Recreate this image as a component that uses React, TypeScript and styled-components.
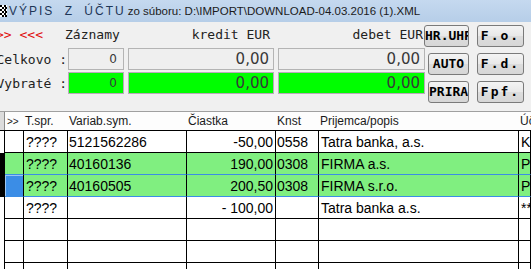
import React from 'react';
import styled, { createGlobalStyle } from 'styled-components';

const GlobalStyle = createGlobalStyle`
  html, body {
    margin: 0;
    padding: 0;
    background: #f0f0f0;
    overflow: hidden;
  }
`;

const MONO = '"DejaVu Sans Mono", "Liberation Mono", monospace';
const SANS = '"Liberation Sans", Arial, sans-serif';
const COLS = '5px 19px 44px 119px 89px 43px 200px 1fr';

const Window = styled.div`
  width: 531px;
  height: 269px;
  overflow: hidden;
  background: #f0f0f0;
  font-family: ${SANS};
`;

const TitleBar = styled.div`
  height: 22px;
  display: flex;
  align-items: center;
  background: linear-gradient(#c5d9ef, #b6cee8);
  color: #1e3657;
  white-space: nowrap;
`;

const TitleIcon = styled.svg`
  width: 7px;
  height: 12px;
  margin-right: 2px;
  flex: none;
`;

const TitleMain = styled.span`
  font-size: 12px;
  letter-spacing: 2px;
  word-spacing: 5px;
  margin-right: 2px;
`;

const TitleFile = styled.span`
  font-size: 11.5px;
  color: #1b1b1b;
`;

const TopArea = styled.div`
  height: 89px;
  display: flex;
`;

const Summary = styled.div`
  display: grid;
  grid-template-columns: 64px 56px 146px 147px;
  grid-template-rows: 24px 22px 22px;
  column-gap: 4px;
  row-gap: 2px;
  width: 425px;
  font-family: ${MONO};
  font-size: 13px;
  color: #222;
`;

const Caption = styled.div<{ $right?: boolean; $pad?: number }>`
  display: flex;
  align-items: center;
  justify-content: ${({ $right }) => ($right ? 'flex-end' : 'flex-start')};
  padding-right: ${({ $pad }) => $pad ?? 0}px;
  white-space: nowrap;
`;

const RowLabel = styled.div`
  display: flex;
  align-items: center;
  justify-content: flex-end;
  margin-right: -3px;
  white-space: nowrap;
`;

const Arrows = styled.span`
  color: #e01010;
  margin-left: -4px;
`;

const Records = styled.span`
  margin-left: -3px;
`;

const Field = styled.div<{ $green?: boolean; $small?: boolean }>`
  box-sizing: border-box;
  display: flex;
  align-items: center;
  justify-content: flex-end;
  padding-right: ${({ $small }) => ($small ? 6 : 4)}px;
  border: 1px solid ${({ $green }) => ($green ? '#bba9bb' : '#b4b4b4')};
  background: ${({ $green }) => ($green ? '#00fe00' : '#efefef')};
  font-family: "DejaVu Sans", sans-serif;
  font-size: ${({ $small }) => ($small ? 12 : 15)}px;
  color: #383838;
`;

const Buttons = styled.div`
  display: grid;
  grid-template-columns: 45px 47px;
  grid-template-rows: repeat(3, 22px);
  column-gap: 8px;
  row-gap: 6px;
  margin: 3px 0 0 -1px;
  align-content: start;
`;

const Btn = styled.div<{ $w?: number; $spaced?: boolean }>`
  box-sizing: border-box;
  width: ${({ $w }) => ($w ? `${$w}px` : '100%')};
  justify-self: end;
  overflow: hidden;
  white-space: nowrap;
  text-align: center;
  line-height: 20px;
  border: 1px solid #7a7a7a;
  border-radius: 3px;
  background: linear-gradient(#f4f4f4, #e8e8e8 50%, #dddddd 51%, #d6d6d6);
  font-family: ${MONO};
  font-weight: bold;
  font-size: 13px;
  letter-spacing: ${({ $spaced }) => ($spaced ? 2 : 0)}px;
  color: #000;
`;

const Table = styled.div`
  border-top: 1px solid #a0a0a0;
  font-family: ${SANS};
`;

const HeadRow = styled.div`
  display: grid;
  grid-template-columns: ${COLS};
  height: 18px;
  background: #fdfdfd;
  border-bottom: 1px solid #000;
  font-size: 12px;
  color: #1a1a1a;
`;

const HeadCell = styled.div<{ $marker?: boolean }>`
  display: flex;
  align-items: center;
  padding-left: 1px;
  white-space: nowrap;
  overflow: hidden;
  background: ${({ $marker }) => ($marker ? '#dcdcdc' : 'transparent')};
  border-right: ${({ $marker }) => ($marker ? '1px solid #8a8a8a' : 'none')};
`;

const Small = styled.span`
  font-size: 10px;
  margin-left: 1px;
`;

const Row = styled.div<{ $bg?: string; $line?: string }>`
  display: grid;
  grid-template-columns: ${COLS};
  height: 22px;
  background: ${({ $bg }) => $bg ?? '#fff'};
  font-size: 14px;
  color: #000;
  --line: ${({ $line }) => $line ?? '#000'};
`;

const Marker = styled.div<{ $on?: boolean }>`
  background: ${({ $on }) => ($on ? '#000' : '#fff')};
  border-right: 1px solid #000;
`;

const Cell = styled.div<{ $right?: boolean; $focus?: boolean; $tight?: boolean }>`
  display: flex;
  align-items: center;
  justify-content: ${({ $right }) => ($right ? 'flex-end' : 'flex-start')};
  padding: 0 2px 0 ${({ $tight }) => ($tight ? 1 : 2)}px;
  white-space: nowrap;
  overflow: hidden;
  border-right: 1px solid #000;
  border-bottom: 1px solid var(--line);
  background: ${({ $focus }) => ($focus ? '#3b8de6' : 'transparent')};
  box-shadow: ${({ $focus }) => ($focus ? 'inset 1px 1px 0 #9cc6f2' : 'none')};
`;

const rows = [
  { sel: false, t: '????', vs: '5121562286', amt: '-50,00', ks: '0558', who: 'Tatra banka, a.s.', uc: 'K' },
  { sel: true, t: '????', vs: '40160136', amt: '190,00', ks: '0308', who: 'FIRMA a.s.', uc: 'P', line: '#3b8de6' },
  { sel: true, focus: true, t: '????', vs: '40160505', amt: '200,50', ks: '0308', who: 'FIRMA s.r.o.', uc: 'P', line: '#3b8de6' },
  { sel: false, t: '????', vs: '', amt: '- 100,00', ks: '', who: 'Tatra banka a.s.', uc: '**' },
  { sel: false, t: '', vs: '', amt: '', ks: '', who: '', uc: '' },
  { sel: false, t: '', vs: '', amt: '', ks: '', who: '', uc: '' },
  { sel: false, t: '', vs: '', amt: '', ks: '', who: '', uc: '' },
];

export default function App() {
  return (
    <Window>
      <GlobalStyle />
      <TitleBar>
        <TitleIcon viewBox="0 0 7 12">
          <rect x="0" y="0" width="7" height="12" fill="#fff" />
          <rect x="0" y="0" width="2" height="2" fill="#000" />
          <rect x="4" y="0" width="2" height="2" fill="#000" />
          <rect x="2" y="2" width="2" height="2" fill="#000" />
          <rect x="5" y="2" width="2" height="2" fill="#000" />
          <rect x="0" y="4" width="2" height="2" fill="#000" />
          <rect x="4" y="4" width="2" height="2" fill="#000" />
          <rect x="2" y="6" width="2" height="2" fill="#000" />
          <rect x="5" y="6" width="2" height="2" fill="#000" />
          <rect x="0" y="8" width="2" height="2" fill="#000" />
          <rect x="4" y="8" width="2" height="2" fill="#000" />
          <rect x="2" y="10" width="2" height="2" fill="#000" />
          <rect x="5" y="10" width="2" height="2" fill="#000" />
        </TitleIcon>
        <TitleMain>VÝPIS Z ÚČTU</TitleMain>
        <TitleFile>zo súboru: D:\IMPORT\DOWNLOAD-04.03.2016 (1).XML</TitleFile>
      </TitleBar>

      <TopArea>
        <Summary>
          <Caption><Arrows>&gt;&gt; &lt;&lt;&lt;</Arrows></Caption>
          <Caption><Records>Záznamy</Records></Caption>
          <Caption $right $pad={4}>kredit EUR</Caption>
          <Caption $right $pad={2}>debet EUR</Caption>

          <RowLabel>Celkovo :</RowLabel>
          <Field $small>0</Field>
          <Field>0,00</Field>
          <Field>0,00</Field>

          <RowLabel>Vybraté :</RowLabel>
          <Field $small $green>0</Field>
          <Field $green>0,00</Field>
          <Field $green>0,00</Field>
        </Summary>

        <Buttons>
          <Btn $w={45}>HR.UHR</Btn>
          <Btn $spaced>F.o.</Btn>
          <Btn $w={41}>AUTO</Btn>
          <Btn $spaced>F.d.</Btn>
          <Btn $w={41}>PRIRA</Btn>
          <Btn $spaced>Fpf.</Btn>
        </Buttons>
      </TopArea>

      <Table>
        <HeadRow>
          <HeadCell $marker />
          <HeadCell><Small>&gt;&gt;</Small></HeadCell>
          <HeadCell>T.spr.</HeadCell>
          <HeadCell>Variab.sym.</HeadCell>
          <HeadCell>Čiastka</HeadCell>
          <HeadCell>Knst</HeadCell>
          <HeadCell>Prijemca/popis</HeadCell>
          <HeadCell>Účet</HeadCell>
        </HeadRow>
        {rows.map((r, i) => (
          <Row key={i} $bg={r.sel ? '#80ef80' : '#fff'} $line={r.line}>
            <Marker $on={r.sel} />
            <Cell $focus={r.focus} />
            <Cell>{r.t}</Cell>
            <Cell $tight>{r.vs}</Cell>
            <Cell $right>{r.amt}</Cell>
            <Cell $tight>{r.ks}</Cell>
            <Cell>{r.who}</Cell>
            <Cell>{r.uc}</Cell>
          </Row>
        ))}
      </Table>
    </Window>
  );
}
